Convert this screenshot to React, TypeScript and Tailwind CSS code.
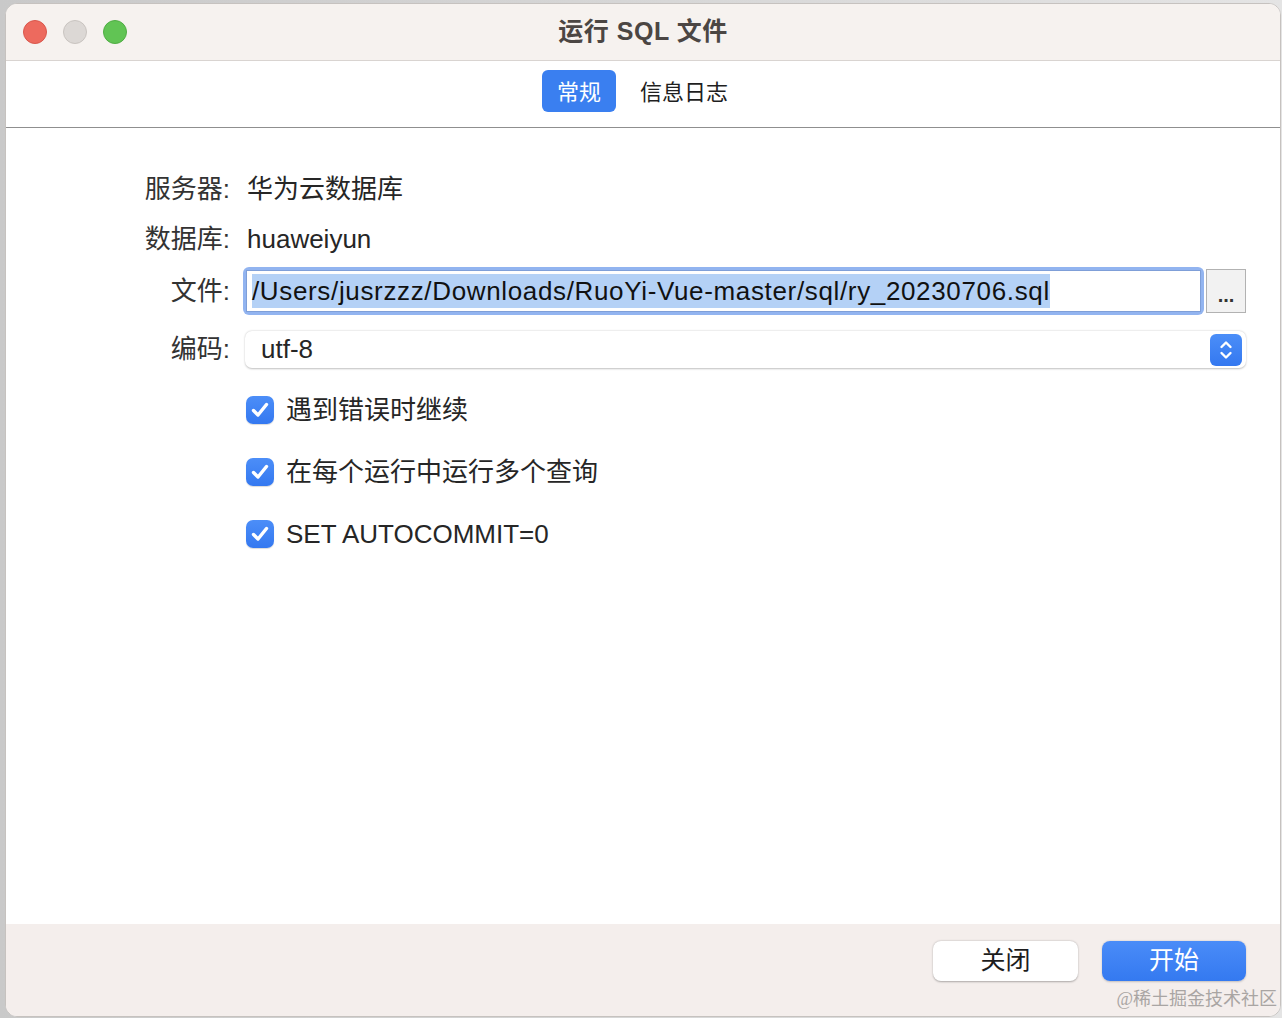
import React from "react";

const SANS = "font-['Liberation_Sans','Noto_Sans_CJK_SC',sans-serif]";

function Check() {
  return (
    <div className="w-[28px] h-[28px] rounded-[7px] bg-gradient-to-b from-[#4c8ef8] to-[#3478f0] flex items-center justify-center shadow-[0_1px_1px_rgba(0,0,0,0.15)] shrink-0">
      <svg width="20" height="18" viewBox="0 0 20 18">
        <path d="M3.5 9.5 L8 14 L16.5 3.5" fill="none" stroke="white" strokeWidth="3.4" strokeLinecap="round" strokeLinejoin="round" />
      </svg>
    </div>
  );
}

export default function App() {
  return (
    <div className={`w-[1282px] h-[1018px] bg-gradient-to-r from-[#c9c9c9] to-[#e4e4e4] pl-[5px] pt-[3px] pr-[1px] pb-[1px] ${SANS}`}>
      <div className="w-full h-full rounded-[12px] border border-[#c6c2bf] overflow-hidden flex flex-col bg-white">
        {/* title bar */}
        <div className="h-[57px] bg-[#f6f2ef] border-b border-[#d9d4d1] flex items-center relative shrink-0">
          <div className="flex items-center gap-[16px] pl-[17px]">
            <div className="w-[24px] h-[24px] rounded-full bg-[#ed6a5e] border border-[#d9574c]" />
            <div className="w-[24px] h-[24px] rounded-full bg-[#dcd8d5] border border-[#c9c4c0]" />
            <div className="w-[24px] h-[24px] rounded-full bg-[#61c454] border border-[#50ad44]" />
          </div>
          <div className="absolute inset-0 flex items-center justify-center pointer-events-none">
            <span className="text-[25px] font-bold text-[#4b4643] tracking-[0.5px]">运行 SQL 文件</span>
          </div>
        </div>
        {/* tabs */}
        <div className="h-[67px] border-b border-[#8f8f8f] flex justify-center items-start pt-[9px] shrink-0">
          <div className="flex items-center gap-[8px]">
            <div className="h-[42px] px-[15px] pt-[3px] rounded-[6px] bg-[#3a7ff0] text-white text-[22px] flex items-center">常规</div>
            <div className="h-[42px] px-[16px] pt-[3px] text-[#1f1f1f] text-[22px] flex items-center">信息日志</div>
          </div>
        </div>
        {/* content */}
        <div className="flex-1 flex flex-col pt-[36px] pr-[34px] text-[26px] text-[#262626]">
          <div className="flex items-center h-[50px]">
            <div className="w-[224px] text-right text-[#333]">服务器:</div>
            <div className="pl-[17px]">华为云数据库</div>
          </div>
          <div className="flex items-center h-[50px]">
            <div className="w-[224px] text-right text-[#333]">数据库:</div>
            <div className="pl-[17px]">huaweiyun</div>
          </div>
          <div className="flex items-center h-[48px] mt-[3px]">
            <div className="w-[224px] text-right text-[#333]">文件:</div>
            <div className="pl-[13px] flex-1 flex items-center">
              <div className="flex-1 h-[48px] rounded-[6px] bg-[#92b4f0] p-[3px]">
                <div className="w-full h-full bg-white border border-[#7f9fd8] flex items-center pl-[5px]">
                  <span className="bg-[#b4d1f6] leading-[34px] text-[#111] tracking-[0.65px]">/Users/jusrzzz/Downloads/RuoYi-Vue-master/sql/ry_20230706.sql</span>
                </div>
              </div>
              <div className="ml-[2px] w-[40px] h-[44px] border border-[#b2b2b2] bg-[#f2f2f2] flex items-end justify-center pb-[7px] text-[20px] font-bold leading-none text-[#333]">...</div>
            </div>
          </div>
          <div className="flex items-center h-[37px] mt-[16px]">
            <div className="w-[224px] text-right text-[#333]">编码:</div>
            <div className="pl-[15px] flex-1">
              <div className="h-[37px] rounded-[7px] bg-white shadow-[0_0.5px_2px_rgba(0,0,0,0.25)] flex items-center justify-between pl-[16px] pr-[4px]">
                <span>utf-8</span>
                <div className="w-[32px] h-[32px] rounded-[6px] bg-gradient-to-b from-[#4b8ef8] to-[#3478f0] flex items-center justify-center">
                  <svg width="16" height="24" viewBox="0 0 16 24">
                    <path d="M3.5 9 L8 4.5 L12.5 9" fill="none" stroke="white" strokeWidth="2.4" strokeLinecap="round" strokeLinejoin="round" />
                    <path d="M3.5 15 L8 19.5 L12.5 15" fill="none" stroke="white" strokeWidth="2.4" strokeLinecap="round" strokeLinejoin="round" />
                  </svg>
                </div>
              </div>
            </div>
          </div>
          <div className="flex flex-col gap-[34px] mt-[28px] pl-[240px]">
            <div className="flex items-center gap-[12px] h-[28px]"><Check /><span>遇到错误时继续</span></div>
            <div className="flex items-center gap-[12px] h-[28px]"><Check /><span>在每个运行中运行多个查询</span></div>
            <div className="flex items-center gap-[12px] h-[28px]"><Check /><span>SET AUTOCOMMIT=0</span></div>
          </div>
        </div>
        {/* footer */}
        <div className="h-[92px] bg-[#f4eeec] shrink-0 relative">
          <div className="flex justify-end gap-[24px] pr-[34px] pt-[17px]">
            <div className="w-[145px] h-[40px] rounded-[8px] bg-white shadow-[0_0.5px_2px_rgba(0,0,0,0.3)] flex items-center justify-center text-[25px] text-[#1d1d1d]">关闭</div>
            <div className="w-[144px] h-[40px] rounded-[8px] bg-gradient-to-b from-[#4a8cf8] to-[#3479f0] shadow-[0_0.5px_2px_rgba(0,0,0,0.2)] flex items-center justify-center text-[25px] text-white">开始</div>
          </div>
          <div className="absolute right-[3px] bottom-[3px] text-[18px] text-[#a9a5a3] font-['Liberation_Serif','Noto_Sans_CJK_SC',serif]">@稀土掘金技术社区</div>
        </div>
      </div>
    </div>
  );
}
